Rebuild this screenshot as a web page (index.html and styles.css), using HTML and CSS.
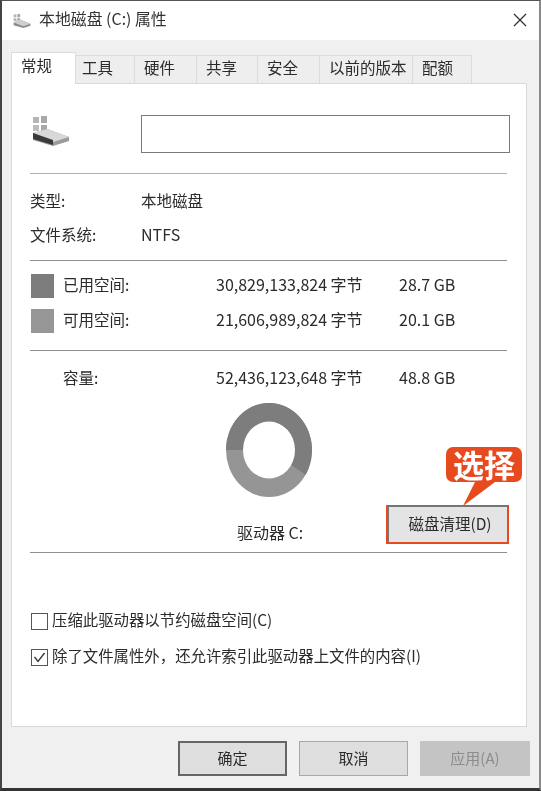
FILE: index.html
```html
<!DOCTYPE html>
<html lang="zh-CN">
<head>
    <meta charset="UTF-8">
    <title>本地磁盘 (C:) 属性</title>
    <link rel="stylesheet" href="styles.css">
</head>
<body>
    <div class="window">
        <div class="titlebar">
            <svg class="title-icon" width="18" height="14" viewBox="0 0 38 30">
                <rect x="1" y="1" width="6" height="6" fill="#b5b5b5"/>
                <rect x="9" y="0" width="6" height="7" fill="#a8a8a8"/>
                <rect x="1" y="9" width="6" height="6" fill="#b5b5b5"/>
                <rect x="9" y="9" width="6" height="6" fill="#a8a8a8"/>
                <polygon points="1,18 14,12 37,21 37,25 22,30 1,24" fill="#8c8c8c"/>
                <polygon points="1,18 14,12 37,21 22,26" fill="#cfcfcf"/>
            </svg>
            <span class="title-text">本地磁盘 (C:) 属性</span>
            <svg class="close" width="14" height="14" viewBox="0 0 14 14">
                <path d="M1 1L13 13M13 1L1 13" stroke="#333" stroke-width="1.3" fill="none"/>
            </svg>
        </div>

        <div class="content">
            <div class="tabs">
                <div class="tab active">常规</div>
                <div class="tab tab-tools">工具</div>
                <div class="tab">硬件</div>
                <div class="tab">共享</div>
                <div class="tab">安全</div>
                <div class="tab">以前的版本</div>
                <div class="tab">配额</div>
            </div>

            <div class="panel">
                <div class="head-row">
                    <svg class="drive-icon" width="38" height="30" viewBox="0 0 38 30">
                        <rect x="1" y="1" width="6" height="6" fill="#b5b5b5"/>
                        <rect x="9" y="0" width="6" height="7" fill="#a8a8a8"/>
                        <rect x="1" y="9" width="6" height="6" fill="#bdbdbd"/>
                        <rect x="9" y="9" width="6" height="6" fill="#a8a8a8"/>
                        <polygon points="1,17 15,13 37,21 37,25 21,30 1,24" fill="#9a9a9a"/>
                        <polygon points="1,17 15,13 37,21 21,26" fill="#d8d8d8"/>
                        <polygon points="1,17 21,24 21,29 1,23" fill="#3a3a3a"/>
                    </svg>
                    <div class="name-box"></div>
                </div>
                <div class="sep sep-head"></div>

                <div class="info-row"><span class="info-label">类型:</span><span>本地磁盘</span></div>
                <div class="info-row"><span class="info-label">文件系统:</span><span class="num">NTFS</span></div>
                <div class="sep sep-info"></div>

                <div class="space-row space-first">
                    <span class="swatch used"></span>
                    <span>已用空间:</span>
                    <span class="num">30,829,133,824 字节</span>
                    <span class="num">28.7 GB</span>
                </div>
                <div class="space-row space-next">
                    <span class="swatch free"></span>
                    <span>可用空间:</span>
                    <span class="num">21,606,989,824 字节</span>
                    <span class="num">20.1 GB</span>
                </div>
                <div class="sep sep-space"></div>
                <div class="space-row space-total">
                    <span></span>
                    <span>容量:</span>
                    <span class="num">52,436,123,648 字节</span>
                    <span class="num">48.8 GB</span>
                </div>

                <svg class="donut" width="88" height="96" viewBox="-44 -48 88 96">
                    <ellipse cx="0" cy="0" rx="43" ry="47" fill="#959595"/>
                    <path d="M-43 0A43 47 0 1 1 36.6 24.7L0 0Z" fill="#7d7d7d"/>
                    <ellipse cx="0" cy="0" rx="26" ry="28.5" fill="#fff"/>
                </svg>

                <div class="drive-row">
                    <span class="drive-label">驱动器 C:</span>
                    <button class="clean-btn">磁盘清理(D)</button>
                    <div class="callout">
                        <div class="callout-text">选择</div>
                        <svg class="callout-tail" width="34" height="24" viewBox="0 0 34 24">
                            <polygon points="12,0 32,0 0,24" fill="#e64a1e"/>
                        </svg>
                    </div>
                </div>
                <div class="sep sep-drive"></div>

                <label class="check-row check-first">
                    <span class="checkbox"></span>
                    <span class="check-text">压缩此驱动器以节约磁盘空间(C)</span>
                </label>
                <label class="check-row check-next">
                    <span class="checkbox">
                        <svg width="15" height="15" viewBox="0 0 15 15">
                            <path d="M2.5 7L6 11.5L12.5 3" stroke="#333" stroke-width="1.3" fill="none"/>
                        </svg>
                    </span>
                    <span class="check-text">除了文件属性外，还允许索引此驱动器上文件的内容(I)</span>
                </label>
            </div>

            <div class="footer">
                <button class="btn btn-default">确定</button>
                <button class="btn">取消</button>
                <button class="btn btn-disabled">应用(A)</button>
            </div>
        </div>
    </div>
</body>
</html>
```

FILE: styles.css
```css
:root {
    --text-color: #2b2b2b;
    --line-color: #8f8f8f;
    --panel-border: #d9d9d9;
    --red: #e64a1e;
}
body {
    margin: 0;
    padding: 0;
    background: #fff;
    font-family: "Noto Sans CJK SC", "Noto Sans", sans-serif;
    font-size: 15.5px;
    color: var(--text-color);
}
.window {
    width: 541px;
    height: 791px;
    box-sizing: border-box;
    border-top: 1px solid #555;
    border-left: 2px solid #444;
    border-right: 2px solid #8a8a8a;
    border-bottom: 3px solid #333;
    display: flex;
    flex-direction: column;
    overflow: hidden;
    filter: blur(0.35px);
}
.titlebar {
    height: 39px;
    flex: none;
    background: #fff;
    display: flex;
    align-items: center;
    padding: 0 12px 0 11px;
}
.title-icon {
    margin: 0 8px 0 0;
}
.title-text {
    font-size: 15.9px;
    color: #333;
    margin-bottom: 4px;
}
.close {
    margin: 0 0 2px auto;
}
.content {
    flex: 1;
    background: #f0f0f0;
    padding: 12px 0 0 9px;
    display: flex;
    flex-direction: column;
}
.tabs {
    display: grid;
    grid-template-columns: 65px 59px 62px 61px 62px 93px 59px;
    width: 461px;
    height: 31px;
    align-items: end;
}
.tab {
    height: 29px;
    box-sizing: border-box;
    background: #eeeeee;
    border: 1px solid #dcdcdc;
    border-left: none;
    border-bottom: none;
    padding-left: 9px;
    font-size: 15.5px;
    line-height: 23px;
}
.tab.tab-tools {
    padding-left: 6px;
}
.tab.active {
    height: 32px;
    background: #fff;
    border-left: 1px solid #dcdcdc;
    line-height: 24px;
    position: relative;
    z-index: 1;
}
.panel {
    width: 516px;
    height: 644px;
    box-sizing: border-box;
    flex: none;
    background: #fff;
    border: 1px solid var(--panel-border);
    padding: 0 19px 0 18px;
}
.head-row {
    display: flex;
    align-items: flex-start;
    padding-top: 31px;
}
.drive-icon {
    margin: 1px 0 0 2px;
}
.name-box {
    width: 367px;
    height: 36px;
    margin: 0 -3px 0 71px;
    flex: none;
    background: #fff;
    border: 1px solid #7a7a7a;
}
.sep {
    height: 1px;
    background: var(--line-color);
}
.sep-head {
    margin-top: 20px;
    margin-bottom: 10px;
    background: #b0b0b0;
}
.info-row {
    display: flex;
    align-items: center;
    height: 34px;
}
.info-row span {
    margin-bottom: 2px;
}
.space-row span:not(.swatch) {
    line-height: 18px;
    margin-bottom: 4px;
}
.info-label {
    width: 111px;
}
.num {
    font-size: 16px;
}
.sep-info {
    margin-top: 8px;
}
.space-row {
    display: grid;
    grid-template-columns: 33px 153px 183px 1fr;
    align-items: center;
    height: 24px;
}
.space-first {
    margin-top: 13px;
}
.space-next {
    margin-top: 11px;
}
.space-total {
    margin-top: 16px;
}
.swatch {
    display: block;
    width: 23px;
    height: 24px;
    margin-left: 1px;
}
.swatch.used {
    background: #7d7d7d;
}
.swatch.free {
    background: #969696;
}
.sep-space {
    margin-top: 17px;
}
.donut {
    display: block;
    margin: 11px 0 0 195px;
}
.drive-row {
    position: relative;
    display: flex;
    align-items: center;
    height: 37px;
    margin-top: 8px;
}
.drive-label {
    margin-left: 207px;
    padding-top: 14px;
    font-size: 16px;
}
.clean-btn {
    margin-left: auto;
    margin-right: -2px;
    width: 123px;
    height: 39px;
    box-sizing: border-box;
    background: #e4e4e4;
    border: 1px solid var(--red);
    border-width: 1px 2px 2px 2px;
    box-shadow: inset 1px 1px 0 #777;
    font-family: inherit;
    font-size: 15.5px;
    color: var(--text-color);
    padding: 0 0 3px 5px;
}
.callout {
    position: absolute;
    left: 416px;
    top: -59px;
}
.callout-text {
    width: 76px;
    height: 35px;
    background: var(--red);
    border-radius: 7px;
    color: #fff;
    font-size: 31px;
    font-weight: 700;
    line-height: 33px;
    text-align: center;
}
.callout-tail {
    display: block;
    margin-left: 17px;
}
.sep-drive {
    margin-top: 9px;
}
.check-row {
    display: flex;
    align-items: center;
    height: 18px;
}
.check-text {
    font-size: 15.4px;
    margin-bottom: 4px;
}
.check-first {
    margin-top: 59px;
}
.check-next {
    margin-top: 18px;
}
.checkbox {
    width: 15px;
    height: 15px;
    flex: none;
    margin: 0 4px 0 1px;
    background: #fff;
    border: 1px solid #555;
}
.checkbox svg {
    display: block;
}
.footer {
    display: flex;
    gap: 12px;
    padding: 14px 0 0 167px;
}
.btn {
    width: 109px;
    height: 35px;
    box-sizing: border-box;
    background: #dedede;
    border: 1px solid #a8a8a8;
    font-family: inherit;
    font-size: 15px;
    color: var(--text-color);
    padding: 0 0 2px;
}
.btn-default {
    border: 2px solid #666;
}
.btn-disabled {
    width: 110px;
    background: #c4c4c4;
    border-color: #c4c4c4;
    color: #8c8c8c;
}
```
